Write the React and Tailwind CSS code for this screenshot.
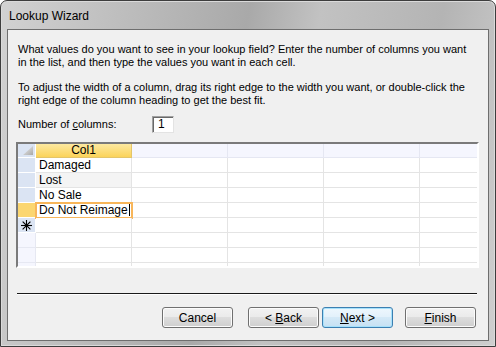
import React from "react";

const font = { fontFamily: '"Liberation Sans", Arial, sans-serif' };

function Btn({ children, def }) {
  return (
    <div
      className={`w-[71px] h-[21px] rounded-[3px] border flex items-center justify-center text-[12px] text-black ${
        def
          ? "border-[#3c7fb1] shadow-[inset_0_0_0_1px_#a6e1fb] bg-[linear-gradient(#eef7fd_0%,#e3f1fb_45%,#d4e9f7_50%,#c6e1f3_100%)]"
          : "border-[#707070] shadow-[inset_0_0_0_1px_#fcfcfc] bg-[linear-gradient(#f2f2f2_0%,#ebebeb_45%,#dddddd_50%,#cfcfcf_100%)]"
      }`}
    >
      <span className="whitespace-pre">{children}</span>
    </div>
  );
}

function Star() {
  return (
    <svg width="11" height="11" viewBox="0 0 11 11" className="block">
      <g stroke="#000" strokeWidth="1.1" strokeLinecap="square">
        <line x1="5.5" y1="0.5" x2="5.5" y2="10.5" />
        <line x1="0.5" y1="5.5" x2="10.5" y2="5.5" />
        <line x1="2" y1="2" x2="9" y2="9" />
        <line x1="9" y1="2" x2="2" y2="9" />
      </g>
    </svg>
  );
}

function Row({ children, current, shade, newRow, empty }) {
  const selBg = current
    ? "bg-[#fbd670]"
    : empty
    ? "bg-[#f5f6fe]"
    : "bg-[#dbe4f3]";
  return (
    <div className="flex h-[15px] shrink-0">
      <div
        className={`w-[18px] shrink-0 ${selBg} border-b border-r ${
          empty ? "border-[#e6e8f2]" : "border-[#ffffff]"
        } flex items-center justify-center`}
      >
        {newRow ? <Star /> : null}
      </div>
      <div
        className={`relative w-[96px] shrink-0 border-b border-r border-[#e4e4e4] ${
          shade ? "bg-[#f4f4f4]" : "bg-white"
        } text-[12px] leading-[14px] pl-[3px] text-black whitespace-nowrap`}
      >
        {children}
        {current ? (
          <div className="absolute -left-[1px] -top-[1px] w-[98px] h-[17px] border-2 border-[#f8b65a]" />
        ) : null}
      </div>
      {[0, 1, 2, 3].map((i) => (
        <div key={i} className="w-[96px] shrink-0 border-b border-r border-[#e4e4e4] bg-white" />
      ))}
    </div>
  );
}

export default function App() {
  return (
    <div style={font} className="w-[496px] h-[347px] relative overflow-hidden bg-white">
      <div className="w-[496px] h-[347px] rounded-t-[7px] border border-[#3d3d3d] bg-[linear-gradient(100deg,#d2d2d2_0%,#c4c4c4_15%,#a9a9a9_45%,#c2c2c2_58%,#b4b4b4_80%,#cfcfcf_100%)] flex flex-col shadow-[inset_0_0_0_1px_#dadada]">
        <div className="h-[28px] shrink-0 flex items-center pl-[8px] text-[12px] text-black pt-[2px]">
          Lookup Wizard
        </div>
        <div className="mx-[6px] mb-[5px] flex-1 border border-[#6e6e6e] bg-[#f0f0f0] flex flex-col">
          <div className="pt-[13px] pl-[10px] text-[11px] leading-[13px] text-black whitespace-nowrap">
            <div>What values do you want to see in your lookup field? Enter the number of columns you want</div>
            <div>in the list, and then type the values you want in each cell.</div>
            <div className="mt-[12px]">To adjust the width of a column, drag its right edge to the width you want, or double-click the</div>
            <div>right edge of the column heading to get the best fit.</div>
          </div>
          <div className="flex items-center pl-[10px] mt-[9px] h-[17px] text-[11px] text-black">
            <span className="w-[134px]">
              Number of <span className="underline">c</span>olumns:
            </span>
            <div className="w-[22px] h-[17px] bg-white border border-t-[#a0a0a0] border-l-[#a0a0a0] border-r-[#e3e3e3] border-b-[#e3e3e3] shadow-[inset_1px_1px_0_#696969] text-[12px] leading-[15px] pl-[5px]">
              1
            </div>
          </div>
          <div className="ml-[8px] mr-[9px] mt-[9px] h-[126px] border-2 border-t-[#7a7a7a] border-l-[#7a7a7a] border-r-[#ffffff] border-b-[#ffffff] overflow-hidden bg-white">
            <div className="flex flex-col">
              <div className="flex h-[14px] shrink-0">
                <div className="w-[18px] shrink-0 bg-[#dbe4f3] border-b border-r border-white relative overflow-hidden">
                  <svg width="17" height="13" className="absolute left-0 top-0">
                    <defs>
                      <linearGradient id="tri" x1="0" y1="0" x2="1" y2="1">
                        <stop offset="0" stopColor="#f0f0f0" />
                        <stop offset="1" stopColor="#a8a8a8" />
                      </linearGradient>
                    </defs>
                    <polygon points="15,2 15,11 5,11" fill="url(#tri)" />
                  </svg>
                </div>
                <div className="w-[96px] shrink-0 border-b border-r border-[#e3c56a] bg-[linear-gradient(#fde9a0,#fbd35a)] text-[12px] leading-[13px] text-center text-black">
                  Col1
                </div>
                {[0, 1, 2, 3].map((i) => (
                  <div key={i} className="w-[96px] shrink-0 border-b border-r border-[#e5e7f2] bg-[#f5f6fe]" />
                ))}
              </div>
              <Row>Damaged</Row>
              <Row shade>Lost</Row>
              <Row>No Sale</Row>
              <Row current>
                Do Not Reimage<span className="inline-block w-[1px] h-[12px] bg-black align-[-2px] ml-[1px]" />
              </Row>
              <Row newRow />
              <Row empty />
              <Row empty />
              <Row empty />
            </div>
          </div>
          <div className="ml-[9px] mr-[11px] mt-[25px] h-[1px] bg-[#1a1a1a] shadow-[0_1px_0_#ffffff]" />
          <div className="flex mt-[13px] pr-[12px] justify-end text-[12px]">
            <Btn>Cancel</Btn>
            <div className="w-[15px]" />
            <Btn>
              {"< "}<span className="underline">B</span>ack
            </Btn>
            <div className="w-[3px]" />
            <Btn def>
              <span className="underline">N</span>{"ext >"}
            </Btn>
            <div className="w-[12px]" />
            <Btn>
              <span className="underline">F</span>inish
            </Btn>
          </div>
        </div>
      </div>
    </div>
  );
}
